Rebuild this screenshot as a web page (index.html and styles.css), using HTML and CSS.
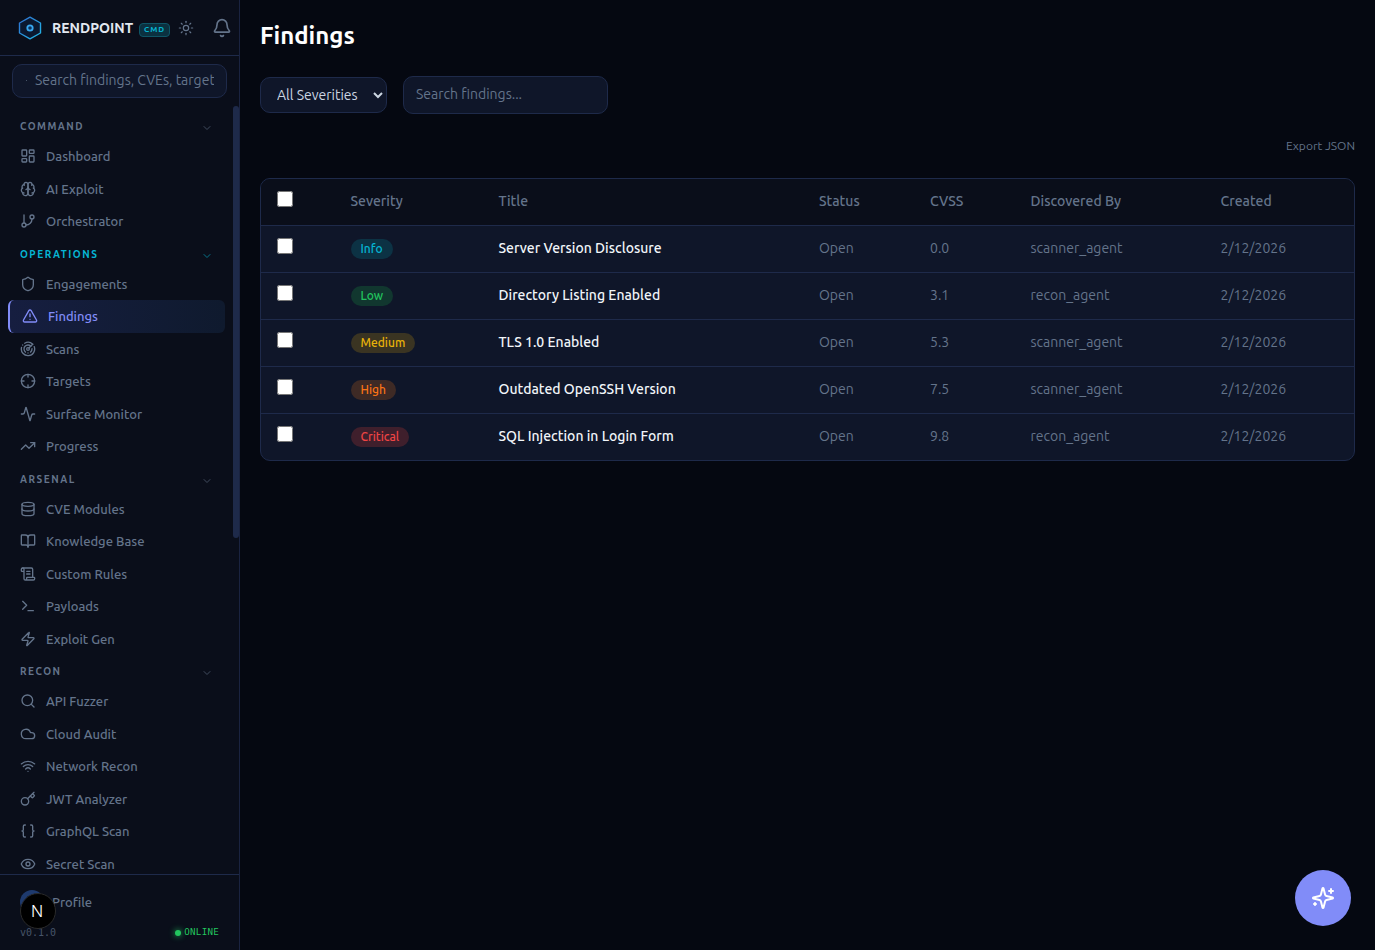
FILE: index.html
```html
<!DOCTYPE html>
<html lang="en">
<head>
<meta charset="utf-8">
<title>Findings</title>
<link rel="stylesheet" href="styles.css">
</head>
<body>
<svg class="defs" aria-hidden="true">
  <symbol id="i-dash" viewBox="0 0 24 24"><rect x="3" y="3" width="7" height="9" rx="1"/><rect x="14" y="3" width="7" height="5" rx="1"/><rect x="14" y="12" width="7" height="9" rx="1"/><rect x="3" y="16" width="7" height="5" rx="1"/></symbol>
  <symbol id="i-brain" viewBox="0 0 24 24"><path d="M12 5a3 3 0 1 0-5.997.125 4 4 0 0 0-2.526 5.77 4 4 0 0 0 .556 6.588A4 4 0 1 0 12 18Z"/><path d="M12 5a3 3 0 1 1 5.997.125 4 4 0 0 1 2.526 5.77 4 4 0 0 1-.556 6.588A4 4 0 1 1 12 18Z"/><path d="M15 13a4.5 4.5 0 0 1-3-4 4.5 4.5 0 0 1-3 4"/><path d="M17.599 6.5a3 3 0 0 0 .399-1.375"/><path d="M6.003 5.125A3 3 0 0 0 6.401 6.5"/><path d="M3.477 10.896a4 4 0 0 1 .585-.396"/><path d="M19.938 10.5a4 4 0 0 1 .585.396"/><path d="M6 18a4 4 0 0 1-1.967-.516"/><path d="M19.967 17.484A4 4 0 0 1 18 18"/></symbol>
  <symbol id="i-branch" viewBox="0 0 24 24"><path d="M6 3v12"/><circle cx="18" cy="6" r="3"/><circle cx="6" cy="18" r="3"/><path d="M18 9a9 9 0 0 1-9 9"/></symbol>
  <symbol id="i-shield" viewBox="0 0 24 24"><path d="M20 13c0 5-3.5 7.5-7.66 8.95a1 1 0 0 1-.67-.01C7.5 20.5 4 18 4 13V6a1 1 0 0 1 1-1c2 0 4.5-1.2 6.24-2.72a1.17 1.17 0 0 1 1.52 0C14.51 3.81 17 5 19 5a1 1 0 0 1 1 1z"/></symbol>
  <symbol id="i-alert" viewBox="0 0 24 24"><path d="m21.73 18-8-14a2 2 0 0 0-3.48 0l-8 14A2 2 0 0 0 4 21h16a2 2 0 0 0 1.73-3"/><path d="M12 9v4"/><path d="M12 17h.01"/></symbol>
  <symbol id="i-radar" viewBox="0 0 24 24"><path d="M19.07 4.93A10 10 0 0 0 6.99 3.34"/><path d="M4 6h.01"/><path d="M2.29 9.62A10 10 0 1 0 21.31 8.35"/><path d="M16.24 7.76A6 6 0 1 0 8.23 16.67"/><path d="M12 18h.01"/><path d="M17.99 11.66A6 6 0 0 1 15.77 16.67"/><circle cx="12" cy="12" r="2"/><path d="m13.41 10.59 5.66-5.66"/></symbol>
  <symbol id="i-cross" viewBox="0 0 24 24"><circle cx="12" cy="12" r="10"/><path d="M22 12h-4"/><path d="M6 12H2"/><path d="M12 6V2"/><path d="M12 22v-4"/></symbol>
  <symbol id="i-activity" viewBox="0 0 24 24"><path d="M22 12h-2.48a2 2 0 0 0-1.93 1.46l-2.35 8.36a.25.25 0 0 1-.48 0L9.24 2.18a.25.25 0 0 0-.48 0l-2.35 8.36A2 2 0 0 1 4.49 12H2"/></symbol>
  <symbol id="i-trend" viewBox="0 0 24 24"><path d="M22 7 13.5 15.5 8.5 10.5 2 17"/><path d="M16 7h6v6"/></symbol>
  <symbol id="i-db" viewBox="0 0 24 24"><ellipse cx="12" cy="5" rx="9" ry="3"/><path d="M3 5V19A9 3 0 0 0 21 19V5"/><path d="M3 12A9 3 0 0 0 21 12"/></symbol>
  <symbol id="i-book" viewBox="0 0 24 24"><path d="M12 7v14"/><path d="M3 18a1 1 0 0 1-1-1V4a1 1 0 0 1 1-1h5a4 4 0 0 1 4 4 4 4 0 0 1 4-4h5a1 1 0 0 1 1 1v13a1 1 0 0 1-1 1h-6a3 3 0 0 0-3 3 3 3 0 0 0-3-3z"/></symbol>
  <symbol id="i-scroll" viewBox="0 0 24 24"><path d="M15 12h-5"/><path d="M15 8h-5"/><path d="M19 17V5a2 2 0 0 0-2-2H4"/><path d="M8 21h12a2 2 0 0 0 2-2v-1a1 1 0 0 0-1-1H11a1 1 0 0 0-1 1v1a2 2 0 1 1-4 0V5a2 2 0 1 0-4 0v2a1 1 0 0 0 1 1h3"/></symbol>
  <symbol id="i-term" viewBox="0 0 24 24"><path d="M12 19h8"/><path d="m4 17 6-6-6-6"/></symbol>
  <symbol id="i-zap" viewBox="0 0 24 24"><path d="M4 14a1 1 0 0 1-.78-1.63l9.9-10.2a.5.5 0 0 1 .86.46l-1.92 6.02A1 1 0 0 0 13 10h7a1 1 0 0 1 .78 1.63l-9.9 10.2a.5.5 0 0 1-.86-.46l1.92-6.02A1 1 0 0 0 11 14z"/></symbol>
  <symbol id="i-search" viewBox="0 0 24 24"><path d="m21 21-4.34-4.34"/><circle cx="11" cy="11" r="8"/></symbol>
  <symbol id="i-cloud" viewBox="0 0 24 24"><path d="M17.5 19H9a7 7 0 1 1 6.71-9h1.79a4.5 4.5 0 1 1 0 9Z"/></symbol>
  <symbol id="i-wifi" viewBox="0 0 24 24"><path d="M12 20h.01"/><path d="M2 8.82a15 15 0 0 1 20 0"/><path d="M5 12.859a10 10 0 0 1 14 0"/><path d="M8.5 16.429a5 5 0 0 1 7 0"/></symbol>
  <symbol id="i-key" viewBox="0 0 24 24"><path d="m15.5 7.5 2.3 2.3a1 1 0 0 0 1.4 0l2.1-2.1a1 1 0 0 0 0-1.4L19 4"/><path d="m21 2-9.6 9.6"/><circle cx="7.5" cy="15.5" r="5.5"/></symbol>
  <symbol id="i-braces" viewBox="0 0 24 24"><path d="M8 3H7a2 2 0 0 0-2 2v5a2 2 0 0 1-2 2 2 2 0 0 1 2 2v5c0 1.1.9 2 2 2h1"/><path d="M16 21h1a2 2 0 0 0 2-2v-5c0-1.1.9-2 2-2a2 2 0 0 1-2-2V5a2 2 0 0 0-2-2h-1"/></symbol>
  <symbol id="i-eye" viewBox="0 0 24 24"><path d="M2.062 12.348a1 1 0 0 1 0-.696 10.75 10.75 0 0 1 19.876 0 1 1 0 0 1 0 .696 10.75 10.75 0 0 1-19.876 0"/><circle cx="12" cy="12" r="3"/></symbol>
  <symbol id="i-chev" viewBox="0 0 24 24"><path d="m6 9 6 6 6-6"/></symbol>
</svg>

<div class="app">
  <aside class="sidebar">
    <header class="brand">
      <svg class="logo" viewBox="0 0 24 24"><defs><linearGradient id="logo-grad" x1="0" y1="0" x2="1" y2="1"><stop offset="0" stop-color="#2f6fd0"/><stop offset="1" stop-color="#22b8e8"/></linearGradient></defs><path class="logo-hex" stroke="url(#logo-grad)" d="M12 1.200 22.500 7v10L12 22.800 1.500 17V7z"/><circle class="logo-ring" cx="12" cy="12" r="2.700"/></svg>
      <span class="brand-name">RENDPOINT</span>
      <span class="brand-tag">CMD</span>
      <svg class="sun" viewBox="0 0 24 24"><circle cx="12" cy="12" r="4"/><path d="M12 2v2"/><path d="M12 20v2"/><path d="m4.930 4.930 1.410 1.410"/><path d="m17.660 17.660 1.410 1.410"/><path d="M2 12h2"/><path d="M20 12h2"/><path d="m6.340 17.660-1.410 1.410"/><path d="m19.070 4.930-1.410 1.410"/></svg>
      <svg class="bell" viewBox="0 0 24 24"><path d="M10.268 21a2 2 0 0 0 3.464 0"/><path d="M3.262 15.326A1 1 0 0 0 4 17h16a1 1 0 0 0 .74-1.673C19.410 13.956 18 12.499 18 8A6 6 0 0 0 6 8c0 4.499-1.411 5.956-2.738 7.326"/></svg>
    </header>
    <div class="side-search">
      <span class="side-search-dot"></span>
      <input class="side-search-input" type="text" placeholder="Search findings, CVEs, targets...">
    </div>
    <div class="nav-box">
      <nav class="nav">
        <div class="sec"><span>COMMAND</span><svg class="chev"><use href="#i-chev"/></svg></div>
        <a class="item"><svg class="ico"><use href="#i-dash"/></svg>Dashboard</a>
        <a class="item"><svg class="ico"><use href="#i-brain"/></svg>AI Exploit</a>
        <a class="item"><svg class="ico"><use href="#i-branch"/></svg>Orchestrator</a>
        <div class="sec sec-on"><span>OPERATIONS</span><svg class="chev"><use href="#i-chev"/></svg></div>
        <a class="item"><svg class="ico"><use href="#i-shield"/></svg>Engagements</a>
        <a class="item item-on"><svg class="ico"><use href="#i-alert"/></svg>Findings</a>
        <a class="item"><svg class="ico"><use href="#i-radar"/></svg>Scans</a>
        <a class="item"><svg class="ico"><use href="#i-cross"/></svg>Targets</a>
        <a class="item"><svg class="ico"><use href="#i-activity"/></svg>Surface Monitor</a>
        <a class="item"><svg class="ico"><use href="#i-trend"/></svg>Progress</a>
        <div class="sec"><span>ARSENAL</span><svg class="chev"><use href="#i-chev"/></svg></div>
        <a class="item"><svg class="ico"><use href="#i-db"/></svg>CVE Modules</a>
        <a class="item"><svg class="ico"><use href="#i-book"/></svg>Knowledge Base</a>
        <a class="item"><svg class="ico"><use href="#i-scroll"/></svg>Custom Rules</a>
        <a class="item"><svg class="ico"><use href="#i-term"/></svg>Payloads</a>
        <a class="item"><svg class="ico"><use href="#i-zap"/></svg>Exploit Gen</a>
        <div class="sec"><span>RECON</span><svg class="chev"><use href="#i-chev"/></svg></div>
        <a class="item"><svg class="ico"><use href="#i-search"/></svg>API Fuzzer</a>
        <a class="item"><svg class="ico"><use href="#i-cloud"/></svg>Cloud Audit</a>
        <a class="item"><svg class="ico"><use href="#i-wifi"/></svg>Network Recon</a>
        <a class="item"><svg class="ico"><use href="#i-key"/></svg>JWT Analyzer</a>
        <a class="item"><svg class="ico"><use href="#i-braces"/></svg>GraphQL Scan</a>
        <a class="item"><svg class="ico"><use href="#i-eye"/></svg>Secret Scan</a>
      </nav>
      <span class="thumb"></span>
    </div>
    <footer class="side-foot">
      <div class="profile"><span class="avatar"></span><span class="profile-name">Profile</span></div>
      <div class="foot-meta"><span class="version">v0.1.0</span><span class="online"><i class="online-dot"></i>ONLINE</span></div>
    </footer>
  </aside>

  <main class="main">
    <h1 class="title">Findings</h1>
    <div class="filters">
      <select class="sev-select"><option>All Severities</option></select>
      <input class="find-input" type="text" placeholder="Search findings...">
    </div>
    <div class="export-row"><a class="export">Export JSON</a></div>
    <div class="table-wrap">
      <table class="table">
        <colgroup><col class="c-check"><col class="c-sev"><col class="c-title"><col class="c-status"><col class="c-cvss"><col class="c-by"><col class="c-date"></colgroup>
        <thead>
          <tr><th><input class="check" type="checkbox"></th><th>Severity</th><th>Title</th><th>Status</th><th>CVSS</th><th>Discovered By</th><th>Created</th></tr>
        </thead>
        <tbody>
          <tr><td><input class="check" type="checkbox"></td><td class="t-sev"><span class="pill pill-info">Info</span></td><td class="t-title">Server Version Disclosure</td><td>Open</td><td>0.0</td><td>scanner_agent</td><td>2/12/2026</td></tr>
          <tr><td><input class="check" type="checkbox"></td><td class="t-sev"><span class="pill pill-low">Low</span></td><td class="t-title">Directory Listing Enabled</td><td>Open</td><td>3.1</td><td>recon_agent</td><td>2/12/2026</td></tr>
          <tr><td><input class="check" type="checkbox"></td><td class="t-sev"><span class="pill pill-med">Medium</span></td><td class="t-title">TLS 1.0 Enabled</td><td>Open</td><td>5.3</td><td>scanner_agent</td><td>2/12/2026</td></tr>
          <tr><td><input class="check" type="checkbox"></td><td class="t-sev"><span class="pill pill-high">High</span></td><td class="t-title">Outdated OpenSSH Version</td><td>Open</td><td>7.5</td><td>scanner_agent</td><td>2/12/2026</td></tr>
          <tr><td><input class="check" type="checkbox"></td><td class="t-sev"><span class="pill pill-crit">Critical</span></td><td class="t-title">SQL Injection in Login Form</td><td>Open</td><td>9.8</td><td>recon_agent</td><td>2/12/2026</td></tr>
        </tbody>
      </table>
    </div>
  </main>
</div>

<button class="fab" aria-label="Assistant"><svg viewBox="0 0 24 24"><path d="M9.937 15.5A2 2 0 0 0 8.5 14.063l-6.135-1.582a.5.5 0 0 1 0-.962L8.5 9.936A2 2 0 0 0 9.937 8.5l1.582-6.135a.5.5 0 0 1 .963 0L14.063 8.5A2 2 0 0 0 15.5 9.937l6.135 1.581a.5.5 0 0 1 0 .964L15.5 14.063a2 2 0 0 0-1.437 1.437l-1.582 6.135a.5.5 0 0 1-.963 0z"/><path d="M20 3v4"/><path d="M22 5h-4"/><path d="M4 17v2"/><path d="M5 18H3"/></svg></button>
<div class="dev-badge">N</div>
</body>
</html>
```
FILE: styles.css
```css
* { box-sizing: border-box; }
html, body { height: 100%; }
body {
  margin: 0;
  background: #050811;
  color: #e2e8f0;
  font-family: "Ubuntu", "Noto Sans", sans-serif;
  overflow: hidden;
}
.defs { display: none; }
.app { display: flex; height: 950px; }

/* Sidebar */
.sidebar {
  width: 240px;
  flex: none;
  display: flex;
  flex-direction: column;
  background: #0a0e1a;
  border-right: 1px solid #1a2340;
}
.brand {
  height: 56px;
  flex: none;
  display: flex;
  align-items: center;
  padding: 0 0 0 18px;
  border-bottom: 1px solid #1e2a4a;
}
.logo { width: 24px; height: 24px; flex: none; }
.logo-hex { fill: #0b1830; stroke-width: 1.4; stroke-linejoin: round; }
.logo-ring { fill: #10305a; stroke: #38a8f0; stroke-width: 1.8; }
.brand-name { margin-left: 10px; font-size: 14px; font-weight: 700; color: #e2e8f0; }
.brand-tag {
  flex: none;
  margin-left: 6px;
  margin-top: 4px;
  width: 31px;
  height: 14px;
  border: 1px solid #0e5566;
  border-radius: 4px;
  background: #0b3140;
  color: #06b6d4;
  font-size: 8px;
  font-weight: 700;
  letter-spacing: 1px;
  line-height: 12px;
  text-align: center;
}
.sun, .bell { fill: none; stroke: #64748b; stroke-width: 2; stroke-linecap: round; stroke-linejoin: round; flex: none; }
.sun { width: 16px; height: 16px; margin-left: 8px; stroke-width: 1.8; }
.bell { width: 20px; height: 20px; margin-left: 18px; }

.side-search { position: relative; flex: none; margin: 8px 12px; }
.side-search-dot { position: absolute; left: 14px; top: 16px; width: 1px; height: 1px; background: #475569; }
.side-search-input {
  display: block;
  width: 100%;
  height: 34px;
  padding: 0 12px 2px 22px;
  border: 1px solid #1e2a4a;
  border-radius: 10px;
  background: #0f1629;
  color: #cbd5e1;
  font: 14px "Ubuntu", "Noto Sans", sans-serif;
  outline: none;
}
.side-search-input::placeholder { color: #64748b; }

.nav-box { position: relative; flex: 1; min-height: 0; overflow: hidden; }
.nav { height: 100%; overflow: hidden; padding: 4px 6px 0 0; }
.thumb { position: absolute; right: 0; top: 0; width: 6px; height: 432px; border-radius: 3px; background: #1e2a4a; }

.sec {
  display: flex;
  align-items: center;
  justify-content: space-between;
  height: 27.5px;
  margin-top: 2.5px;
  padding: 0.5px 20px 0;
  color: #64748b;
  font-size: 10px;
  font-weight: 700;
  letter-spacing: 1.5px;
}
.sec-on { color: #06b6d4; }
.chev { width: 12px; height: 12px; margin-top: 3px; fill: none; stroke: currentColor; stroke-width: 2; stroke-linecap: round; stroke-linejoin: round; opacity: .6; }
.item {
  display: flex;
  align-items: center;
  gap: 10px;
  height: 32.5px;
  margin: 0 8px;
  padding-left: 12px;
  color: #64748b;
  font-size: 13px;
  font-weight: 500;
}
.ico { width: 16px; height: 16px; flex: none; fill: none; stroke: currentColor; stroke-width: 2; stroke-linecap: round; stroke-linejoin: round; }
.item-on {
  color: #818cf8;
  border-left: 2px solid #818cf8;
  border-radius: 6px;
  background: linear-gradient(90deg, #161e40, #0f1a2e);
}

.side-foot { flex: none; height: 76px; border-top: 1px solid #1e2a4a; padding: 12px 20px 0; }
.profile { display: flex; align-items: center; gap: 8px; height: 30px; }
.avatar { width: 24px; height: 24px; border-radius: 50%; background: #1e3a6e; }
.profile-name { color: #64748b; font-size: 13px; font-weight: 500; }
.foot-meta { display: flex; align-items: center; justify-content: space-between; margin-top: 2px; height: 26px; }
.version { color: #475569; font: 10px "DejaVu Sans Mono", monospace; }
.online { display: flex; align-items: center; gap: 3px; margin-top: -1px; color: #22c55e; font: 9.2px "DejaVu Sans Mono", monospace; letter-spacing: .25px; }
.online-dot { width: 6px; height: 6px; margin-top: 3px; border-radius: 50%; background: #22c55e; box-shadow: 0 0 6px #22c55e; }

/* Main */
.main { flex: 1; min-width: 0; padding: 20px 20px 0; }
.title { margin: 0; height: 32px; font-size: 24px; line-height: 32px; font-weight: 700; color: #fff; }
.filters { display: flex; align-items: flex-start; gap: 16px; margin-top: 24px; height: 38px; }
.sev-select {
  width: 127px;
  height: 36.5px;
  margin-top: .5px;
  padding: 0 4px 0 12px;
  border: 1px solid #1e2a4a;
  border-radius: 10px;
  background: #0f1629;
  color: #cbd5e1;
  font: 14px "Ubuntu", "Noto Sans", sans-serif;
}
.find-input {
  width: 205px;
  height: 38px;
  padding: 0 12px 2px;
  border: 1px solid #1e2a4a;
  border-radius: 10px;
  background: #0f1629;
  color: #cbd5e1;
  font: 14px "Ubuntu", "Noto Sans", sans-serif;
  outline: none;
}
.find-input::placeholder { color: #64748b; }
.export-row { display: flex; justify-content: flex-end; margin-top: 24px; height: 16px; }
.export { color: #64748b; font-size: 12px; line-height: 16px; }

.table-wrap {
  margin-top: 24px;
  border: 1px solid #1e2a4a;
  border-radius: 10px;
  overflow: hidden;
  background: #0f1629;
}
.table { width: 100%; border-collapse: separate; border-spacing: 0; table-layout: fixed; font-size: 14px; }
.c-check { width: 73.5px; }
.c-sev { width: 148px; }
.c-title { width: 320.5px; }
.c-status { width: 111px; }
.c-cvss { width: 100.5px; }
.c-by { width: 190px; }
.table th, .table td { height: 47px; padding: 0 16px 2px; text-align: left; color: #64748b; font-weight: 400; border-bottom: 1px solid #1e2a4a; vertical-align: middle; }
.table th { background: #0a0e1a; font-weight: 500; }
.table tr:last-child td { border-bottom: 0; height: 46px; }
.table .t-title { color: #f1f5f9; font-weight: 500; }
.table .t-sev { padding-bottom: 0; }
.check { display: block; width: 16px; height: 16px; margin: -4px 0 0; }
.pill { display: inline-block; height: 20px; padding: 0 10px; border-radius: 10px; font-size: 12px; line-height: 20px; font-weight: 500; vertical-align: middle; }
.pill-info { color: #06b6d4; background: #0c3244; }
.pill-low { color: #22c55e; background: #11372f; }
.pill-med { color: #eab308; background: #3a3422; }
.pill-high { color: #f97316; background: #3e2a25; }
.pill-crit { color: #ef4444; background: #3f1f2c; }

.fab {
  position: fixed;
  right: 24px;
  bottom: 24px;
  width: 56px;
  height: 56px;
  padding: 0;
  border: 0;
  border-radius: 50%;
  background: #818cf8;
  display: flex;
  align-items: center;
  justify-content: center;
}
.fab svg { width: 24px; height: 24px; fill: none; stroke: #fff; stroke-width: 2; stroke-linecap: round; stroke-linejoin: round; }
.dev-badge {
  position: fixed;
  left: 20px;
  top: 893px;
  width: 36px;
  height: 36px;
  padding-right: 2px;
  border-radius: 50%;
  border: 1px solid #2a2a2a;
  background: #000;
  color: #fff;
  font: 300 16px/34px "Inter", sans-serif;
  text-align: center;
}
```
